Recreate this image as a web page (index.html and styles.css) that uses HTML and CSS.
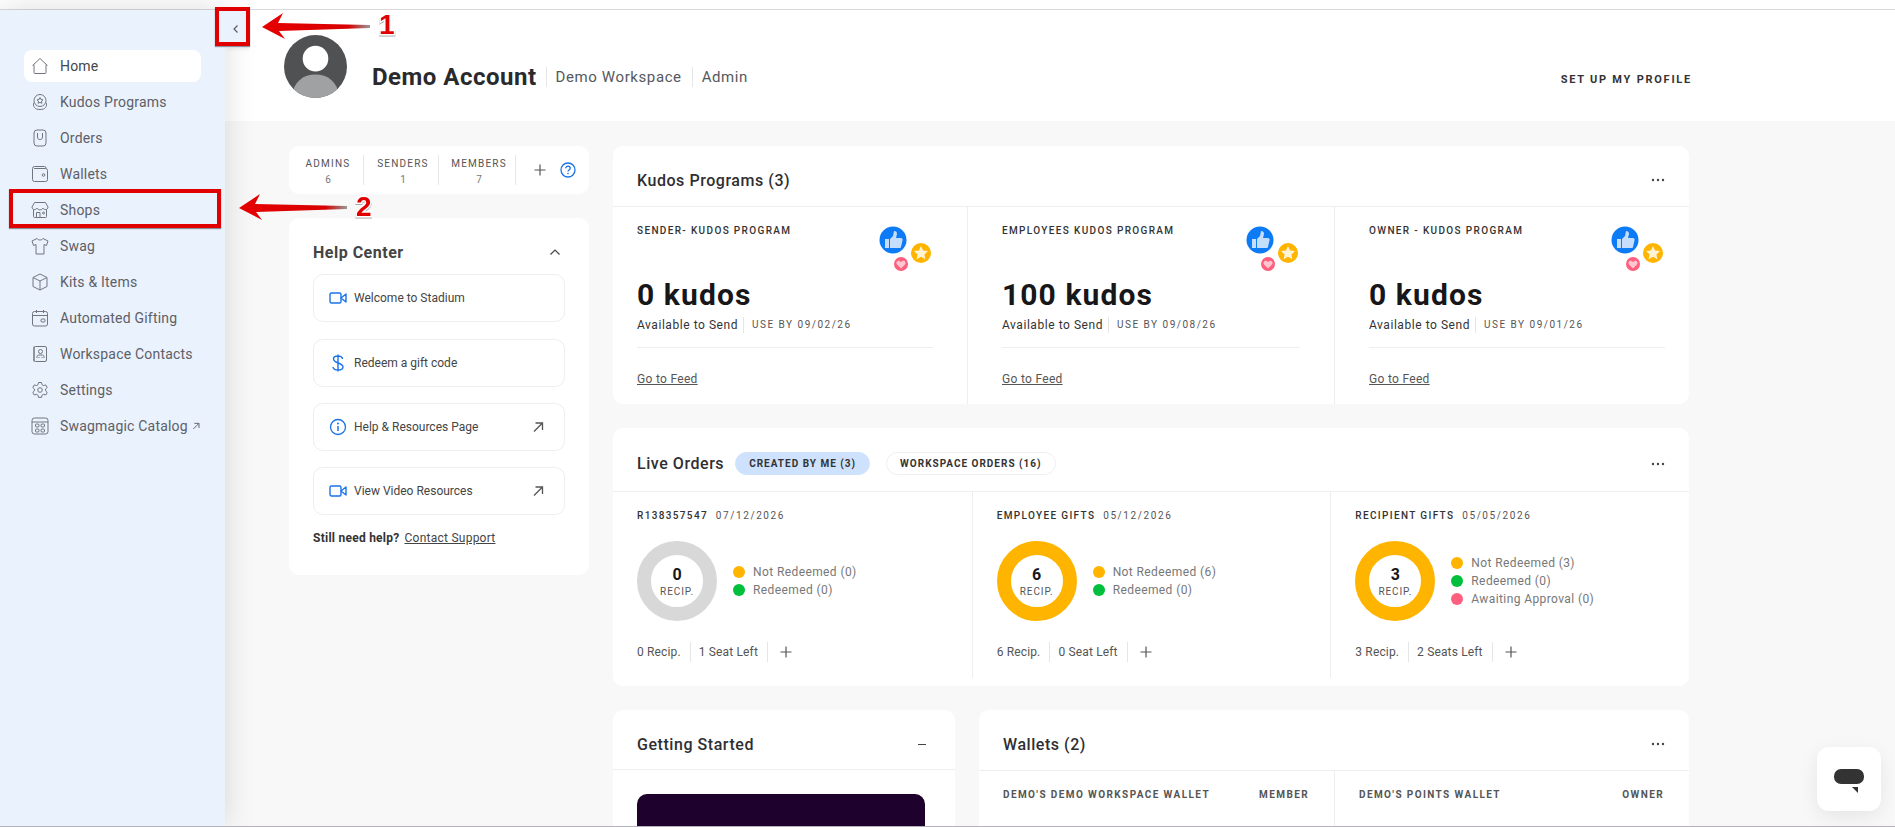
FILE: index.html
```html
<!DOCTYPE html>
<html lang="en">
<head>
    <meta charset="UTF-8">
    <meta name="viewport" content="width=device-width, initial-scale=1.0">
    <title>Dashboard</title>
    <link rel="stylesheet" href="styles.css">
</head>
<body>
    <svg class="defs" width="0" height="0">
        <defs>
            <linearGradient id="arrow-fill" x1="0" y1="0" x2="1" y2="0">
                <stop offset="0" stop-color="#e60000"/>
                <stop offset="0.8" stop-color="#d80000"/>
                <stop offset="1" stop-color="#999"/>
            </linearGradient>
        </defs>
        <symbol id="i-video" viewBox="0 0 18 14"><rect x="1" y="2" width="11" height="10" rx="1.5" fill="none" stroke="#1a73e8" stroke-width="1.4"/><path d="M12 7l5-4v8z" fill="none" stroke="#1a73e8" stroke-width="1.4" stroke-linejoin="round"/></symbol>
        <symbol id="i-out" viewBox="0 0 12 12"><path d="M2 10.500L10 2.500M3.500 2h7v7" fill="none" stroke="#555" stroke-width="1.300"/></symbol>
        <symbol id="i-plus" viewBox="0 0 12 12"><path d="M6 .5v11M.5 6h11" fill="none" stroke="#555" stroke-width="1.200"/></symbol>
        <symbol id="i-dots" viewBox="0 0 14 4"><circle cx="2" cy="2" r="1.200" fill="#444"/><circle cx="7" cy="2" r="1.200" fill="#444"/><circle cx="12" cy="2" r="1.200" fill="#444"/></symbol>
        <symbol id="i-kudos" viewBox="0 0 54 46">
            <circle cx="14" cy="14" r="13.500" fill="#0d7bf5"/>
            <path d="M6 13h4v9H6zM11 13l3-3 1-5c2 0 3 1 3 3l-1 4h5c1 0 2 1 1.600 2l-1.600 7c-.2 1-1 1-2 1h-9z" fill="#c5defc"/>
            <circle cx="42" cy="27" r="10" fill="#ffb400"/>
            <path d="M42 20l2.100 4.500 4.900.6-3.600 3.300 1 4.800-4.400-2.400-4.400 2.400 1-4.800-3.600-3.300 4.900-.6z" fill="#fff3d6"/>
            <circle cx="22" cy="38" r="7" fill="#ff5f7e"/>
            <path d="M22 42.500l-4-4c-1.500-2 .5-4.500 2.500-3.500l1.500 1 1.500-1c2-1 4 1.500 2.500 3.500z" fill="#ffc6d0"/>
        </symbol>
    </svg>

    <div class="topbar"></div>
    <div class="app">
        <aside class="sidebar">
            <button class="collapse">
                <svg width="8" height="10" viewBox="0 0 8 10"><path d="M5.500 1.500L2 5l3.500 3.500" fill="none" stroke="#555" stroke-width="1.100"/></svg>
            </button>
            <nav class="nav">
                <a class="nav-item active">
                    <svg class="nav-icon" viewBox="0 0 18 18"><path d="M1.500 8.500L9 1.500l7.500 7M3 7.500V15.500a1 1 0 0 0 1 1h10a1 1 0 0 0 1-1V7.500"/></svg>
                    Home
                </a>
                <a class="nav-item">
                    <svg class="nav-icon" viewBox="0 0 18 18"><circle cx="9" cy="7.500" r="6"/><path d="M9 4.500l1 2 2 .3-1.500 1.400.4 2.100L9 9.300l-1.900 1 .4-2.100L6 6.800l2-.3zM3 9.500c-1 1.500-.5 4 .5 5 1 1.500 3 2 5.500 2s4.500-.5 5.500-2c1-1 1.500-3.500.5-5"/></svg>
                    Kudos Programs
                </a>
                <a class="nav-item">
                    <svg class="nav-icon" viewBox="0 0 18 18"><rect x="3" y="1" width="12" height="16" rx="3"/><path d="M6.500 4v4c0 3.500 5 3.500 5 0V4"/></svg>
                    Orders
                </a>
                <a class="nav-item">
                    <svg class="nav-icon" viewBox="0 0 18 18"><path d="M15 3.500V3a1.500 1.500 0 0 0-1.500-1.500H3.500A2 2 0 0 0 1.500 3.500v11a2 2 0 0 0 2 2h11a2 2 0 0 0 2-2v-9a2 2 0 0 0-2-2H3"/><circle cx="12.500" cy="10" r="1.300"/></svg>
                    Wallets
                </a>
                <a class="nav-item">
                    <svg class="nav-icon" viewBox="0 0 18 18"><path d="M3.500 1.500h11l2.500 4.500c0 3-4 3.500-5 1-1 2.500-5 2.500-6 0-1 2.500-5 2-5-1zM2.500 8.500v7a1 1 0 0 0 1 1h11a1 1 0 0 0 1-1v-7M5.500 16.500v-5h3.500v5"/><circle cx="12.500" cy="12" r="1"/></svg>
                    Shops
                </a>
                <a class="nav-item">
                    <svg class="nav-icon" viewBox="0 0 18 18"><path d="M6 1.500c1 2 5 2 6 0l5 2.500-1.500 4.500-2.500-1v9.500H5V7.500l-2.500 1L1 4z"/></svg>
                    Swag
                </a>
                <a class="nav-item">
                    <svg class="nav-icon" viewBox="0 0 18 18"><path d="M9 1l7 3.500v9L9 17l-7-3.500v-9zM2 4.500L9 8l7-3.500M9 8v9"/></svg>
                    Kits &amp; Items
                </a>
                <a class="nav-item">
                    <svg class="nav-icon" viewBox="0 0 18 18"><rect x="1.500" y="2.500" width="15" height="14.500" rx="2"/><path d="M1.500 6.500h15M5.500 1v3M12.500 1v3"/><rect x="10" y="10" width="4" height="3" rx="1"/></svg>
                    Automated Gifting
                </a>
                <a class="nav-item">
                    <svg class="nav-icon" viewBox="0 0 18 18"><path d="M3 1.500v15"/><rect x="3" y="1.500" width="12.500" height="15" rx="1.500"/><circle cx="9.500" cy="6.500" r="2"/><path d="M6 13v-1.500c0-1 1-1.500 2-1.500h3c1 0 2 .5 2 1.500V13M8 13v-1M11 13v-1"/></svg>
                    Workspace Contacts
                </a>
                <a class="nav-item">
                    <svg class="nav-icon" viewBox="0 0 18 18"><path d="M7.500 1.500h3l.5 2.200 1.600.9 2.100-.7 1.500 2.600-1.600 1.500v1.900l1.600 1.500-1.500 2.600-2.100-.7-1.600.9-.5 2.200h-3l-.5-2.200-1.600-.9-2.100.7-1.500-2.600 1.600-1.500V8L1.800 6.500l1.500-2.600 2.100.7 1.600-.9z"/><circle cx="9" cy="9" r="2.300"/></svg>
                    Settings
                </a>
                <a class="nav-item">
                    <svg class="nav-icon" viewBox="0 0 18 18"><rect x="1" y="1" width="16" height="16" rx="2.500"/><path d="M1 5h16"/><rect x="4.500" y="7" width="3.500" height="3" rx="1"/><rect x="10" y="7" width="3.500" height="3" rx="1"/><rect x="4.500" y="12" width="3.500" height="3" rx="1"/><rect x="10" y="12" width="3.500" height="3" rx="1"/></svg>
                    Swagmagic Catalog
                    <svg class="nav-out" width="8" height="8"><use href="#i-out"/></svg>
                </a>
            </nav>
        </aside>

        <main class="main">
            <header class="profile">
                <svg class="avatar" viewBox="0 0 64 64">
                    <defs><clipPath id="avatar-clip"><circle cx="32" cy="32" r="32"/></clipPath></defs>
                    <circle cx="32" cy="32" r="32" fill="#505153"/>
                    <circle cx="32" cy="24" r="13" fill="#fff"/>
                    <ellipse cx="32" cy="60" rx="23" ry="20" fill="#a0a1a3" clip-path="url(#avatar-clip)"/>
                </svg>
                <div class="profile-name">Demo Account</div>
                <div class="profile-meta">Demo Workspace</div>
                <div class="profile-meta">Admin</div>
                <a class="profile-link">SET UP MY PROFILE</a>
            </header>

            <div class="content">
                <div class="col-left">
                    <div class="stats">
                        <div class="stat stat-a"><span>ADMINS</span><small>6</small></div>
                        <div class="stat stat-b"><span>SENDERS</span><small>1</small></div>
                        <div class="stat stat-c"><span>MEMBERS</span><small>7</small></div>
                        <svg class="stats-plus" width="12" height="12"><use href="#i-plus"/></svg>
                        <svg class="stats-help" width="16" height="16" viewBox="0 0 16 16"><circle cx="8" cy="8" r="7" fill="none" stroke="#1a73e8" stroke-width="1.300"/><path d="M5.800 6.300c0-3 4.400-2.800 4.400 0 0 1.700-2.200 1.600-2.200 3.200" fill="none" stroke="#1a73e8" stroke-width="1.300"/><circle cx="8" cy="11.500" r=".8" fill="#1a73e8"/></svg>
                    </div>

                    <div class="help">
                        <div class="help-head">
                            <h3>Help Center</h3>
                            <svg width="12" height="8" viewBox="0 0 12 8"><path d="M1.500 6.500L6 2l4.500 4.500" fill="none" stroke="#444" stroke-width="1.200"/></svg>
                        </div>
                        <a class="help-item"><svg class="help-icon" viewBox="0 0 18 18"><use href="#i-video"/></svg>Welcome to Stadium</a>
                        <a class="help-item"><svg class="help-icon" viewBox="0 0 18 18"><path d="M13.500 5c-.5-4-9-4-9 0 0 4.500 9.500 3.500 9.500 8 0 4-9.500 4-10 0M9 .5v17" fill="none" stroke="#1a73e8" stroke-width="1.400"/></svg>Redeem a gift code</a>
                        <a class="help-item"><svg class="help-icon" viewBox="0 0 18 18"><circle cx="9" cy="9" r="7.500" fill="none" stroke="#1a73e8" stroke-width="1.300"/><path d="M9 8v5" stroke="#1a73e8" stroke-width="1.500"/><circle cx="9" cy="5.500" r="1" fill="#1a73e8"/></svg>Help &amp; Resources Page<svg class="help-out" width="12" height="12"><use href="#i-out"/></svg></a>
                        <a class="help-item"><svg class="help-icon" viewBox="0 0 18 18"><use href="#i-video"/></svg>View Video Resources<svg class="help-out" width="12" height="12"><use href="#i-out"/></svg></a>
                        <div class="help-foot"><b>Still need help?</b><a>Contact Support</a></div>
                    </div>
                </div>

                <div class="col-right">
                    <section class="card kudos">
                        <div class="card-head">
                            <h2>Kudos Programs (3)</h2>
                            <svg class="dots" width="14" height="4"><use href="#i-dots"/></svg>
                        </div>
                        <div class="kudos-grid">
                            <div class="kudos-col">
                                <div class="kudos-inner">
                                    <div class="label">SENDER- KUDOS PROGRAM</div>
                                    <svg class="kudos-icon" width="54" height="46"><use href="#i-kudos"/></svg>
                                    <div class="kudos-count">0 kudos</div>
                                    <div class="kudos-sub"><span>Available to Send</span><em>USE BY 09/02/26</em></div>
                                    <a class="feed">Go to Feed</a>
                                </div>
                            </div>
                            <div class="kudos-col">
                                <div class="kudos-inner">
                                    <div class="label">EMPLOYEES KUDOS PROGRAM</div>
                                    <svg class="kudos-icon" width="54" height="46"><use href="#i-kudos"/></svg>
                                    <div class="kudos-count">100 kudos</div>
                                    <div class="kudos-sub"><span>Available to Send</span><em>USE BY 09/08/26</em></div>
                                    <a class="feed">Go to Feed</a>
                                </div>
                            </div>
                            <div class="kudos-col">
                                <div class="kudos-inner">
                                    <div class="label">OWNER - KUDOS PROGRAM</div>
                                    <svg class="kudos-icon" width="54" height="46"><use href="#i-kudos"/></svg>
                                    <div class="kudos-count">0 kudos</div>
                                    <div class="kudos-sub"><span>Available to Send</span><em>USE BY 09/01/26</em></div>
                                    <a class="feed">Go to Feed</a>
                                </div>
                            </div>
                        </div>
                    </section>

                    <section class="card orders">
                        <div class="card-head">
                            <h2>Live Orders</h2>
                            <span class="pill on">CREATED BY ME (3)</span>
                            <span class="pill">WORKSPACE ORDERS (16)</span>
                            <svg class="dots" width="14" height="4"><use href="#i-dots"/></svg>
                        </div>
                        <div class="orders-grid">
                            <div class="order">
                                <div class="label">R138357547 <i>07/12/2026</i></div>
                                <div class="order-body">
                                    <div class="donut empty"><b>0</b><span>RECIP.</span></div>
                                    <ul class="legend">
                                        <li><i class="amber"></i>Not Redeemed (0)</li>
                                        <li><i class="green"></i>Redeemed (0)</li>
                                    </ul>
                                </div>
                                <div class="order-foot"><span>0 Recip.</span><span>1 Seat Left</span><svg width="12" height="12"><use href="#i-plus"/></svg></div>
                            </div>
                            <div class="order">
                                <div class="label">EMPLOYEE GIFTS <i>05/12/2026</i></div>
                                <div class="order-body">
                                    <div class="donut"><b>6</b><span>RECIP.</span></div>
                                    <ul class="legend">
                                        <li><i class="amber"></i>Not Redeemed (6)</li>
                                        <li><i class="green"></i>Redeemed (0)</li>
                                    </ul>
                                </div>
                                <div class="order-foot"><span>6 Recip.</span><span>0 Seat Left</span><svg width="12" height="12"><use href="#i-plus"/></svg></div>
                            </div>
                            <div class="order">
                                <div class="label">RECIPIENT GIFTS <i>05/05/2026</i></div>
                                <div class="order-body">
                                    <div class="donut"><b>3</b><span>RECIP.</span></div>
                                    <ul class="legend">
                                        <li><i class="amber"></i>Not Redeemed (3)</li>
                                        <li><i class="green"></i>Redeemed (0)</li>
                                        <li><i class="pink"></i>Awaiting Approval (0)</li>
                                    </ul>
                                </div>
                                <div class="order-foot"><span>3 Recip.</span><span>2 Seats Left</span><svg width="12" height="12"><use href="#i-plus"/></svg></div>
                            </div>
                        </div>
                    </section>

                    <div class="bottom-row">
                        <section class="card started">
                            <div class="card-head">
                                <h2>Getting Started</h2>
                                <span class="minus"></span>
                            </div>
                            <div class="video-box"></div>
                        </section>
                        <section class="card wallets">
                            <div class="card-head">
                                <h2>Wallets (2)</h2>
                                <svg class="dots" width="14" height="4"><use href="#i-dots"/></svg>
                            </div>
                            <div class="wallet-grid">
                                <div class="wallet"><span>DEMO'S DEMO WORKSPACE WALLET</span><span>MEMBER</span></div>
                                <div class="wallet"><span>DEMO'S POINTS WALLET</span><span>OWNER</span></div>
                            </div>
                        </section>
                    </div>
                </div>
            </div>
        </main>
    </div>

    <div class="chat-btn">
        <svg width="30" height="24" viewBox="0 0 30 24"><rect width="30" height="15" rx="7" fill="#333"/><path d="M18 18h6v6z" fill="#333"/></svg>
    </div>

    <!-- red callouts drawn on top of the screenshot -->
    <div class="mark mark-toggle"></div>
    <div class="mark mark-shops"></div>
    <svg class="arrow arrow-1" width="108" height="26" viewBox="0 0 108 26"><path d="M0 14L21 0l-5 10 92 2v3l-91 3 6 8z" fill="url(#arrow-fill)"/></svg>
    <svg class="arrow arrow-2" width="108" height="26" viewBox="0 0 108 26"><path d="M0 14L21 0l-5 10 92 2v3l-91 3 6 8z" fill="url(#arrow-fill)"/></svg>
    <span class="mark-num num-1">1</span>
    <span class="mark-num num-2">2</span>
</body>
</html>
```

FILE: styles.css
```css
* {
    box-sizing: border-box;
}
body {
    margin: 0;
    height: 100vh;
    overflow: hidden;
    display: flex;
    flex-direction: column;
    font-family: Roboto, "Liberation Sans", sans-serif;
    color: #333;
    background-color: #f8f8f8;
    border-bottom: 1px solid #b5b1ba;
}
h2, h3 {
    margin: 0;
}
.defs {
    position: absolute;
}
.topbar {
    flex: none;
    height: 10px;
    background-color: #fff;
    border-bottom: 1px solid #d8dadd;
}
.app {
    flex: 1;
    display: flex;
    min-height: 0;
}

/* sidebar */
.sidebar {
    position: relative;
    z-index: 2;
    flex: none;
    width: 225px;
    padding: 40px 24px 0;
    background-color: #eaf2fe;
    box-shadow: 0 0 30px rgba(0, 0, 0, 0.14);
}
.collapse {
    position: absolute;
    top: 0;
    left: 225px;
    width: 22px;
    height: 38px;
    padding: 0;
    border: none;
    background-color: #eaf2fe;
    display: flex;
    align-items: center;
    justify-content: center;
    box-shadow: 2px 2px 3px rgba(0, 0, 0, 0.06);
}
.nav {
    display: flex;
    flex-direction: column;
    gap: 4px;
}
.nav-item {
    height: 32px;
    padding-left: 7px;
    display: flex;
    align-items: center;
    gap: 11px;
    border-radius: 8px;
    font-size: 14px;
    letter-spacing: 0.2px;
    color: #5d6066;
    white-space: nowrap;
}
.nav-item.active {
    background-color: #fff;
    color: #44474c;
}
.nav-icon {
    width: 18px;
    height: 18px;
    flex: none;
    fill: none;
    stroke: #72767c;
    stroke-width: 1;
}
.nav-out {
    flex: none;
    margin-left: -7px;
}

/* profile header */
.profile {
    flex: none;
    height: 111px;
    padding: 25px 0 0 59px;
    display: flex;
    align-items: flex-start;
    background-color: #fff;
}
.avatar {
    width: 63px;
    height: 63px;
    flex: none;
}
.profile-name {
    margin: 27px 9px 0 25px;
    font-size: 24px;
    font-weight: 700;
    line-height: 30px;
    letter-spacing: 0.5px;
    color: #2a2a2e;
}
.profile-meta {
    margin-top: 32px;
    padding: 0 10px 0 9px;
    border-left: 1px solid #e6e6e6;
    font-size: 15px;
    line-height: 20px;
    letter-spacing: 0.6px;
    color: #55585c;
}
.profile-link {
    margin: 38px 203px 0 auto;
    font-size: 11px;
    font-weight: 700;
    line-height: 14px;
    letter-spacing: 1.75px;
    color: #333;
}

/* layout */
.main {
    flex: 1;
    min-width: 0;
    display: flex;
    flex-direction: column;
}
.content {
    flex: 1;
    min-height: 0;
    overflow: hidden;
    padding: 25px 206px 0 64px;
    display: flex;
    gap: 24px;
}
.col-left {
    flex: none;
    width: 300px;
    display: flex;
    flex-direction: column;
    gap: 24px;
}
.col-right {
    flex: 1;
    min-width: 0;
    display: flex;
    flex-direction: column;
    gap: 24px;
}

/* stats */
.stats {
    flex: none;
    height: 48px;
    display: flex;
    align-items: center;
    background-color: #fff;
    border-radius: 10px;
}
.stat {
    height: 30px;
    padding: 3px 0 0 4px;
    display: flex;
    flex-direction: column;
    align-items: center;
    justify-content: space-between;
    border-right: 1px solid #e8e8e8;
    font-size: 10px;
    letter-spacing: 1.2px;
    color: #555;
}
.stat small {
    font-size: 10px;
    color: #777;
    letter-spacing: 0;
}
.stat-a {
    width: 75px;
}
.stat-b {
    width: 75px;
}
.stat-c {
    width: 77px;
}
.stats-plus {
    margin-left: 18px;
}
.stats-help {
    margin-left: 14px;
}

/* help center */
.help {
    height: 357px;
    padding: 24px;
    background-color: #fff;
    border-radius: 10px;
}
.help-head {
    height: 20px;
    margin-bottom: 12px;
    padding-right: 4px;
    display: flex;
    align-items: center;
    justify-content: space-between;
}
.help-head h3 {
    font-size: 16px;
    font-weight: 700;
    letter-spacing: 0.5px;
    color: #444;
}
.help-item {
    height: 48px;
    margin-bottom: 16px;
    padding: 0 20px 0 15px;
    display: flex;
    align-items: center;
    border: 1px solid #eee;
    border-radius: 10px;
    font-size: 12px;
    color: #444;
}
.help-head + .help-item {
    margin-bottom: 17px;
}
.help-icon {
    width: 18px;
    height: 18px;
    margin-right: 7px;
    flex: none;
}
.help-out {
    margin-left: auto;
}
.help-foot {
    margin-top: 8px;
    display: flex;
    align-items: center;
    gap: 5px;
    font-size: 12px;
    letter-spacing: 0.25px;
}
.help-foot a {
    color: #444;
    text-decoration: underline;
}

/* cards */
.card {
    background-color: #fff;
    border-radius: 10px;
    overflow: hidden;
}
.card-head {
    height: 61px;
    padding: 8px 24px 0;
    display: flex;
    align-items: center;
    border-bottom: 1px solid #eee;
}
.card-head h2 {
    font-size: 16px;
    font-weight: 500;
    letter-spacing: 0.55px;
    color: #2f2f33;
}
.dots {
    margin-left: auto;
}
.label {
    font-size: 10px;
    font-weight: 500;
    line-height: 14px;
    letter-spacing: 1.35px;
    color: #333;
}
.label i {
    margin-left: 4px;
    font-style: normal;
    font-weight: 400;
    letter-spacing: 1.6px;
    color: #555;
}

/* kudos programs */
.kudos {
    flex: none;
    height: 258px;
}
.kudos-grid {
    height: 197px;
    display: grid;
    grid-template-columns: 354px 367px 1fr;
}
.kudos-col {
    padding: 17px 34px 0;
    border-left: 1px solid #eee;
}
.kudos-col:first-child {
    padding-left: 24px;
    border-left: none;
}
.kudos-col:last-child {
    padding-right: 24px;
}
.kudos-inner {
    position: relative;
}
.kudos-icon {
    position: absolute;
    top: 2px;
    right: 0;
}
.kudos-count {
    margin-top: 39px;
    font-size: 30px;
    font-weight: 700;
    line-height: 36px;
    letter-spacing: 1.1px;
    color: #17171a;
}
.kudos-sub {
    margin-top: 4px;
    padding-bottom: 14px;
    display: flex;
    align-items: center;
    border-bottom: 1px solid #eee;
    font-size: 12px;
    line-height: 16px;
    letter-spacing: 0.55px;
}
.kudos-sub em {
    margin-left: 5px;
    padding-left: 8px;
    border-left: 1px solid #e6e6e6;
    font-style: normal;
    font-size: 10px;
    letter-spacing: 1.5px;
    color: #555;
}
.feed {
    display: inline-block;
    margin-top: 23px;
    font-size: 12px;
    line-height: 16px;
    letter-spacing: 0.3px;
    color: #555;
    text-decoration: underline;
}

/* live orders */
.orders {
    flex: none;
    height: 258px;
}
.orders .card-head {
    height: 64px;
}
.pill {
    height: 23px;
    padding: 0 13px;
    display: flex;
    align-items: center;
    margin-left: 16px;
    border: 1px solid #eee;
    border-radius: 12px;
    font-size: 10px;
    font-weight: 700;
    letter-spacing: 1px;
    color: #333;
}
.pill.on {
    margin-left: 11px;
    border-color: #cfe2fd;
    background-color: #cfe2fd;
}
.orders-grid {
    height: 186px;
    display: grid;
    grid-template-columns: repeat(3, 1fr);
}
.order {
    padding: 17px 24px 0;
    border-left: 1px solid #eee;
}
.order:first-child {
    border-left: none;
}
.order-body {
    height: 80px;
    margin-top: 18px;
    display: flex;
    align-items: center;
    gap: 16px;
}
.donut {
    width: 80px;
    height: 80px;
    flex: none;
    padding-top: 2px;
    display: flex;
    flex-direction: column;
    align-items: center;
    justify-content: center;
    border: 14px solid #ffb400;
    border-radius: 50%;
}
.donut.empty {
    border-color: #d8d8d8;
}
.donut b {
    font-size: 16px;
    line-height: 20px;
    color: #17171a;
}
.donut span {
    font-size: 10px;
    line-height: 14px;
    letter-spacing: 0.9px;
    color: #555;
}
.legend {
    margin: 0;
    padding: 0;
    list-style: none;
}
.legend li {
    height: 18px;
    display: flex;
    align-items: center;
    gap: 8px;
    font-size: 12px;
    letter-spacing: 0.4px;
    color: #777;
}
.legend i {
    width: 12px;
    height: 12px;
    border-radius: 50%;
}
.amber {
    background-color: #ffb400;
}
.green {
    background-color: #00bf3c;
}
.pink {
    background-color: #ff5f7e;
}
.order-foot {
    height: 20px;
    margin-top: 21px;
    display: flex;
    align-items: center;
    font-size: 12px;
    letter-spacing: 0.15px;
    color: #555;
}
.order-foot span {
    height: 20px;
    display: flex;
    align-items: center;
    padding-right: 9px;
    margin-right: 8px;
    border-right: 1px solid #e6e6e6;
}
.order-foot svg {
    margin-left: 4px;
}

/* bottom row */
.bottom-row {
    flex: 1;
    min-height: 0;
    display: flex;
    gap: 24px;
}
.started {
    flex: none;
    width: 342px;
    border-radius: 10px 10px 0 0;
}
.started .card-head {
    height: 60px;
    padding-top: 10px;
}
.minus {
    width: 8px;
    height: 1px;
    margin-left: auto;
    margin-right: 5px;
    background-color: #444;
}
.video-box {
    height: 32px;
    margin: 24px 30px 0 24px;
    background-color: #1e012d;
    border-radius: 10px 10px 0 0;
}
.wallets {
    flex: 1;
    border-radius: 10px 10px 0 0;
}
.wallet-grid {
    display: grid;
    grid-template-columns: 355px 1fr;
    height: 55px;
}
.wallet {
    padding: 17px 25px 0 24px;
    display: flex;
    justify-content: space-between;
    font-size: 10px;
    font-weight: 700;
    line-height: 14px;
    letter-spacing: 1.4px;
    color: #555;
}
.wallet + .wallet {
    border-left: 1px solid #eee;
}

/* chat widget */
.chat-btn {
    position: fixed;
    right: 14px;
    bottom: 16px;
    z-index: 3;
    width: 64px;
    height: 64px;
    display: flex;
    align-items: center;
    justify-content: center;
    padding-top: 4px;
    background-color: #fff;
    border-radius: 12px;
    box-shadow: 0 6px 20px rgba(0, 0, 0, 0.08);
}

/* callouts */
.mark {
    position: absolute;
    z-index: 5;
    border: 4px solid #e00000;
    box-shadow: 0 1px 1px rgba(0, 0, 0, 0.4);
}
.mark-toggle {
    left: 215px;
    top: 7px;
    width: 35px;
    height: 39px;
}
.mark-shops {
    left: 9px;
    top: 189px;
    width: 212px;
    height: 39px;
}
.arrow {
    position: absolute;
    z-index: 5;
}
.arrow-1 {
    left: 262px;
    top: 13px;
}
.arrow-2 {
    left: 239px;
    top: 194px;
}
.mark-num {
    position: absolute;
    z-index: 5;
    font-family: "Liberation Sans", sans-serif;
    font-size: 28px;
    font-weight: 700;
    line-height: 30px;
    color: #e00000;
    -webkit-text-stroke: 3px #fff;
    paint-order: stroke fill;
    filter: drop-shadow(0 1px 0 #aaa);
}
.num-1 {
    left: 379px;
    top: 10px;
}
.num-2 {
    left: 356px;
    top: 192px;
}
```
